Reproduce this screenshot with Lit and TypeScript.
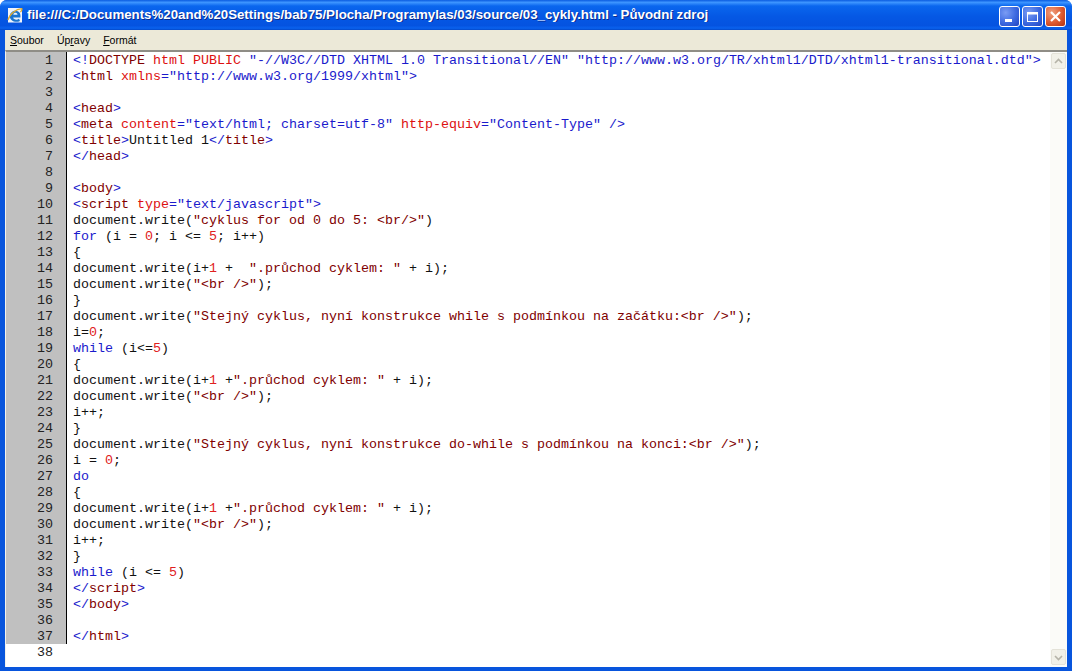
import { LitElement, html, css, TemplateResult } from "lit";
import { customElement } from "lit/decorators.js";

type Seg = [string, string];
const T = (s: string): Seg => ["t", s]; // punctuation blue
const N = (s: string): Seg => ["n", s]; // tag name
const A = (s: string): Seg => ["a", s]; // attribute
const V = (s: string): Seg => ["v", s]; // html value
const P = (s: string): Seg => ["p", s]; // plain
const S = (s: string): Seg => ["s", s]; // js string
const K = (s: string): Seg => ["k", s]; // keyword
const D = (s: string): Seg => ["d", s]; // number

const DW = "document.write";
const LINES: Seg[][] = [
  [T("<!"), N("DOCTYPE "), A("html PUBLIC "), V('"-//W3C//DTD XHTML 1.0 Transitional//EN" "http://www.w3.org/TR/xhtml1/DTD/xhtml1-transitional.dtd"'), T(">")],
  [T("<"), N("html "), A("xmlns"), T("="), V('"http://www.w3.org/1999/xhtml"'), T(">")],
  [],
  [T("<"), N("head"), T(">")],
  [T("<"), N("meta "), A("content"), T("="), V('"text/html; charset=utf-8" '), A("http-equiv"), T("="), V('"Content-Type" '), T("/>")],
  [T("<"), N("title"), T(">"), P("Untitled 1"), T("</"), N("title"), T(">")],
  [T("</"), N("head"), T(">")],
  [],
  [T("<"), N("body"), T(">")],
  [T("<"), N("script "), A("type"), T("="), V('"text/javascript"'), T(">")],
  [P(DW + "("), S('"cyklus for od 0 do 5: <br/>"'), P(")")],
  [K("for"), P(" (i = "), D("0"), P("; i <= "), D("5"), P("; i++)")],
  [P("{")],
  [P(DW + "(i+"), D("1"), P(" +  "), S('".průchod cyklem: "'), P(" + i);")],
  [P(DW + "("), S('"<br />"'), P(");")],
  [P("}")],
  [P(DW + "("), S('"Stejný cyklus, nyní konstrukce while s podmínkou na začátku:<br />"'), P(");")],
  [P("i="), D("0"), P(";")],
  [K("while"), P(" (i<="), D("5"), P(")")],
  [P("{")],
  [P(DW + "(i+"), D("1"), P(" +"), S('".průchod cyklem: "'), P(" + i);")],
  [P(DW + "("), S('"<br />"'), P(");")],
  [P("i++;")],
  [P("}")],
  [P(DW + "("), S('"Stejný cyklus, nyní konstrukce do-while s podmínkou na konci:<br />"'), P(");")],
  [P("i = "), D("0"), P(";")],
  [K("do")],
  [P("{")],
  [P(DW + "(i+"), D("1"), P(" +"), S('".průchod cyklem: "'), P(" + i);")],
  [P(DW + "("), S('"<br />"'), P(");")],
  [P("i++;")],
  [P("}")],
  [K("while"), P(" (i <= "), D("5"), P(")")],
  [T("</"), N("script"), T(">")],
  [T("</"), N("body"), T(">")],
  [],
  [T("</"), N("html"), T(">")],
];

@customElement("app-root")
export class AppRoot extends LitElement {
  static styles = css`
    :host { display: block; width: 1072px; height: 671px; overflow: hidden; }
    .win {
      width: 1072px; height: 671px; box-sizing: border-box;
      display: flex; flex-direction: column;
      background: #0855dd; border-radius: 7px 7px 0 0;
    }
    .title {
      height: 30px; flex: none; display: flex; align-items: center;
      padding: 0 6px 0 7px; gap: 4px;
      border-radius: 7px 7px 0 0;
      background: linear-gradient(180deg, #0a5be0 0%, #3d95ff 8%, #0a66ee 20%, #0558e4 55%, #0553e0 85%, #0a62ee 94%, #0348c8 100%);
      color: #fff;
      font: bold 13.3px/1 "Liberation Sans", Arial, sans-serif;
      text-shadow: 1px 1px 0 #0a2a8c;
      white-space: nowrap;
    }
    .title .ie { width: 16px; height: 16px; flex: none; }
    .title .text { flex: 1; letter-spacing: -0.02px; overflow: hidden; }
    .btns { display: flex; gap: 2px; margin-top: 2px; }
    .btn {
      width: 21px; height: 21px; box-sizing: border-box; flex: none;
      border: 1px solid #fff; border-radius: 3px;
      background: radial-gradient(circle at 30% 30%, #7a9cf4 0%, #3c69e0 55%, #2244c0 100%);
      display: flex; align-items: center; justify-content: center;
    }
    .btn.close { background: radial-gradient(circle at 30% 30%, #f0a080 0%, #dd5a30 55%, #b03010 100%); }
    .btn svg { display: block; }
    .body {
      flex: 1; min-height: 0; display: flex; flex-direction: column;
      margin: 0 5px 4px; background: #ece9d8;
    }
    .menu {
      height: 20px; flex: none; display: flex; align-items: center;
      padding-left: 5px; gap: 13px;
      font: 10.5px/1 "Liberation Sans", Arial, sans-serif;
      color: #000; background: #ece9d8;
    }
    .menu u { text-decoration: underline; }
    .editor {
      flex: 1; min-height: 0; display: flex; background: #fff;
      border-top: 2px solid #8f8d86;
      margin: 0; border-left: 1px solid #f4f3ec;
    }
    .content { flex: 1; min-width: 0; overflow: hidden; }
    .row {
      display: flex; height: 16px;
      font: 13.33px/18px "Liberation Mono", "Courier New", monospace;
      white-space: pre;
    }
    .num {
      width: 61px; flex: none; box-sizing: border-box; text-align: right; padding-right: 13px;
      background: #c0c0c0; border-right: 1px solid #000; color: #222;
      margin-right: 6px;
    }
    .row.last .num { background: #fff; border-right-color: #fff; }
    .t { color: #1a1acc; } .n { color: #800000; } .a { color: #dd1010; }
    .v { color: #1a1acc; } .p { color: #111; } .s { color: #800000; }
    .k { color: #1a1acc; } .d { color: #e02020; }
    .scroll {
      width: 17px; flex: none; display: flex; flex-direction: column; justify-content: space-between;
      background: #fbfbf8; box-sizing: border-box; padding: 1px 0 2px;
    }
    .arrow {
      width: 15px; height: 16px; box-sizing: border-box;
      border: 1px solid #e4e2d8; border-radius: 2px; background: #f1f0e8;
      display: flex; align-items: center; justify-content: center;
      margin-left: 1px;
    }
  `;

  private renderLine(segs: Seg[], i: number): TemplateResult {
    return html`<div class="row"><span class="num">${i + 1}</span><span>${segs.map(([c, s]) => html`<span class=${c}>${s}</span>`)}</span></div>`;
  }

  render() {
    return html`<div class="win">
      <div class="title">
        <svg class="ie" viewBox="0 0 16 16">
          <rect x="1" y="1" width="14" height="14.5" fill="#eef4fc"/>
          <path d="M13.4 10.5H6.2c.2 2 3.6 3.2 5.8 1.2l1 2.2C8.8 16.3 2.6 14 2.8 9c.2-5 6.6-7 9.6-3.6 1 1.2 1.2 3.4 1 5.1zM6.3 7.8h4.2C10.2 5.2 6.6 5.2 6.3 7.8z" fill="#1a74cf"/>
          <path d="M1 13C2.5 7 9 2 14.8 1.6c.4 1-.4 2.6-1.4 3.6" fill="none" stroke="#e2ac2e" stroke-width="1.2"/>
        </svg>
        <span class="text">file:///C:/Documents%20and%20Settings/bab75/Plocha/Programylas/03/source/03_cykly.html - Původní zdroj</span>
        <div class="btns">
          <div class="btn"><svg width="13" height="13" viewBox="0 0 13 13"><rect x="2" y="9" width="7" height="3" fill="#fff"/></svg></div>
          <div class="btn"><svg width="13" height="13" viewBox="0 0 13 13"><rect x="1.5" y="2.5" width="10" height="9" fill="none" stroke="#fff"/><rect x="1" y="2" width="11" height="2.5" fill="#fff"/></svg></div>
          <div class="btn close"><svg width="13" height="13" viewBox="0 0 13 13"><path d="M2 2l9 9M11 2l-9 9" stroke="#fff" stroke-width="2.2"/></svg></div>
        </div>
      </div>
      <div class="body">
        <div class="menu">
          <span><u>S</u>oubor</span><span>Úp<u>r</u>avy</span><span><u>F</u>ormát</span>
        </div>
        <div class="editor">
          <div class="content">
            ${LINES.map((l, i) => this.renderLine(l, i))}
            <div class="row last"><span class="num">38</span></div>
          </div>
          <div class="scroll">
            <div class="arrow"><svg width="9" height="7" viewBox="0 0 9 7"><path d="M1 5l3.5-3.5L8 5" fill="none" stroke="#b5b3a8" stroke-width="1.6"/></svg></div>
            <div class="arrow"><svg width="9" height="7" viewBox="0 0 9 7"><path d="M1 2l3.5 3.5L8 2" fill="none" stroke="#b5b3a8" stroke-width="1.6"/></svg></div>
          </div>
        </div>
      </div>
    </div>`;
  }
}
